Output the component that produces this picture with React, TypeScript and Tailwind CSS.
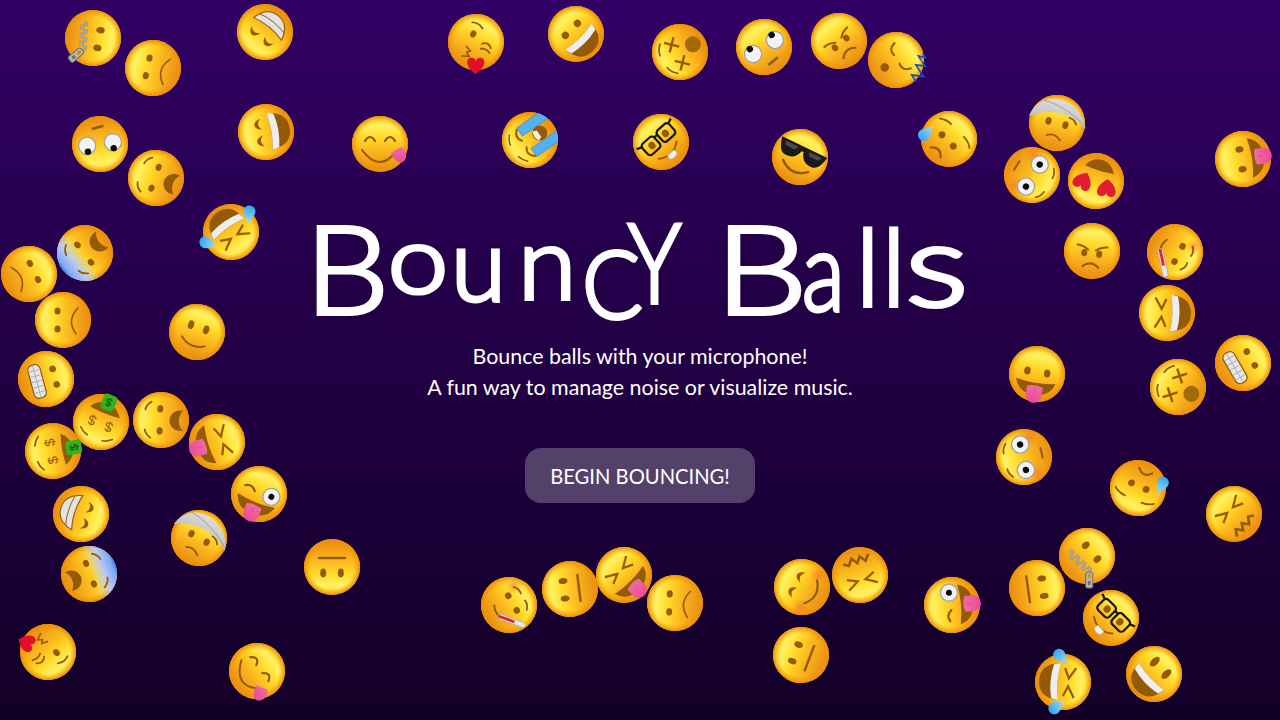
import type { ReactNode } from "react";

const BROWN = "#955a05";

function Arc({ d, w = 1.8 }: { d: string; w?: number }) {
  return <path d={d} fill="none" stroke={BROWN} strokeWidth={w} strokeLinecap="round" />;
}

function Eye({ x, y = -5.5, rx = 3, ry = 4.2 }: { x: number; y?: number; rx?: number; ry?: number }) {
  return <ellipse cx={x} cy={y} rx={rx} ry={ry} fill={BROWN} />;
}

const Eyes = (props: { x?: number; y?: number; rx?: number; ry?: number }) => (
  <>
    <Eye {...props} x={-(props.x ?? 9)} />
    <Eye {...props} x={props.x ?? 9} />
  </>
);

// crescent eyes used by the smiling faces
function Crescent({ x, y }: { x: number; y: number }) {
  return (
    <path
      d={`M${x - 5.5} ${y + 3.5}C${x - 4} ${y - 5.5} ${x + 4} ${y - 5.5} ${x + 5.5} ${y + 3.5}C${x + 2} ${y - 0.5} ${x - 2} ${y - 0.5} ${x - 5.5} ${y + 3.5}Z`}
      fill={BROWN}
    />
  );
}

function SmileEyes() {
  return (
    <>
      <Crescent x={-8.5} y={-7} />
      <Crescent x={8.5} y={-7} />
    </>
  );
}

function Squint() {
  return (
    <>
      <path d="M-15 -12L-4 -5.5L-14 -1" fill="none" stroke={BROWN} strokeWidth={2.2} />
      <path d="M15 -12L4 -5.5L14 -1" fill="none" stroke={BROWN} strokeWidth={2.2} />
    </>
  );
}

function OpenMouth({ teeth = true }: { teeth?: boolean }) {
  return (
    <>
      <path d="M-18.5 3.5Q0 7.5 18.5 3.5Q17 24 0 24Q-17 24 -18.5 3.5Z" fill={BROWN} />
      {teeth && <path d="M-18.5 3.5Q0 7.5 18.5 3.5Q18 7.5 17 10.5Q0 14.5 -17 10.5Q-18 7.5 -18.5 3.5Z" fill="#eeeeee" />}
    </>
  );
}

function TongueMouth() {
  return (
    <>
      <path d="M-20 7Q0 11 20 7Q16 21 0 21Q-16 21 -20 7Z" fill={BROWN} />
      <path d="M-8 13Q0 10 8 13V21A8 8 0 0 1 -8 21Z" fill="url(#tongue)" />
      <path d="M0 15V20" stroke="#d0478a" strokeWidth={0.7} />
    </>
  );
}

function GoogleEye({ x, y = 0, r = 8.6, px = 0, py = 0, pr = 3.2 }: { x: number; y?: number; r?: number; px?: number; py?: number; pr?: number }) {
  return (
    <>
      <circle cx={x} cy={y} r={r} fill="#f2f2f4" stroke="#a2a2a6" strokeWidth={1.3} />
      <circle cx={x + px} cy={y + py} r={pr} fill="#0b0b0b" />
    </>
  );
}

function Drop({ x, y, rot = 0, s = 1 }: { x: number; y: number; rot?: number; s?: number }) {
  return (
    <path
      transform={`translate(${x} ${y}) rotate(${rot}) scale(${s})`}
      d="M0 -10C1.5 -4 6 -1.5 6 3A6 6 0 0 1 -6 3C-6 -1.5 -1.5 -4 0 -10Z"
      fill="url(#drop)"
    />
  );
}

const HEART = "M0 7.5C-10 1 -8.5 -6.5 -3.8 -6.5C-1.6 -6.5 0 -4.8 0 -3.2C0 -4.8 1.6 -6.5 3.8 -6.5C8.5 -6.5 10 1 0 7.5Z";

const Blush = () => (
  <>
    <circle cx={-18} cy={9} r={9} fill="url(#blush)" />
    <circle cx={18} cy={9} r={9} fill="url(#blush)" />
  </>
);

const OpenFrownFeatures = () => (
  <>
    <Eyes x={11} y={-1} ry={3} rx={3.6} />
    <Arc d="M-18 -10Q-15 -15 -10 -16" />
    <Arc d="M18 -10Q15 -15 10 -16" />
    <path d="M-10 22C-11.5 12 -4 8.5 0 8.5C4 8.5 11.5 12 10 22C5 16.5 -5 16.5 -10 22Z" fill={BROWN} />
  </>
);

const Bandage = () => (
  <>
    <path
      d="M-29 0C-27 -12 -20 -21 -8 -23C6 -25 24 -18 29 -1C18 -9 10 -10 0 -10C-12 -10 -22 -5 -29 0Z"
      fill="url(#bandage)"
    />
    <path d="M-18 -19C-4 -19 14 -13 27 -4" fill="none" stroke="#8f8f8f" strokeWidth={0.7} />
  </>
);

// every face is drawn upright in a -28..28 box, the ball then gets rotated
const faces: Record<string, ReactNode> = {
  zipper: (
    <>
      <Eyes y={-6} rx={3.2} ry={4.2} />
      <g fill="#a5a7a9" stroke="#7b7b7b" strokeWidth={0.3}>
        {[-15, -11, -7, -3, 1, 5, 9].map((x, i) => (
          <rect key={x} x={x} y={8 + (i % 2 ? 1.8 : -1.8) - 1.8 + (11 - x) * 0.12} width={4.4} height={3.6} />
        ))}
      </g>
      <g transform="translate(13 8) rotate(-50)">
        <rect x={-3.6} y={1} width={7.2} height={16} rx={1.8} fill="#b4b4b4" stroke="#6c6c6c" strokeWidth={1} />
        <rect x={-1.5} y={3} width={3} height={4} fill="#d98b10" />
        <rect x={-1.4} y={10} width={2.8} height={4} rx={0.8} fill="#6f6f6f" />
      </g>
    </>
  ),
  frown: (
    <>
      <Eyes y={-5.5} rx={3.6} ry={3} />
      <Arc d="M-14 13Q0 3 12 15" w={1.6} />
    </>
  ),
  slight: (
    <>
      <Eyes x={8} y={-5} rx={3} ry={4.4} />
      <Arc d="M-13 9Q-1 19 12 11" w={1.8} />
    </>
  ),
  neutral: (
    <>
      <Eyes x={8.8} y={-6} rx={3} ry={4.4} />
      <path d="M-14 9H14" stroke={BROWN} strokeWidth={2.4} />
    </>
  ),
  rolling: (
    <>
      <GoogleEye x={-13} px={0} py={-6} />
      <GoogleEye x={13} px={0} py={-6} />
      <path d="M-6 17.5L6 16" stroke={BROWN} strokeWidth={2.6} />
    </>
  ),
  openFrown: <OpenFrownFeatures />,
  fear: (
    <>
      <circle r={28} fill="url(#fear)" />
      <OpenFrownFeatures />
    </>
  ),
  smile: (
    <>
      <SmileEyes />
      <OpenMouth />
    </>
  ),
  grin: (
    <>
      <Eyes x={8.5} y={-6.5} rx={3.6} ry={3.6} />
      <OpenMouth />
    </>
  ),
  grinOval: (
    <>
      <Eyes x={8.5} y={-9} rx={3.4} ry={6} />
      <OpenMouth />
    </>
  ),
  beam: (
    <>
      <SmileEyes />
      <path d="M-18 4Q0 9 18 4Q14 21 0 21Q-14 21 -18 4Z" fill="#e2e2e2" stroke={BROWN} strokeWidth={1.1} />
      <path d="M-16 11Q0 15 16 11" fill="none" stroke={BROWN} strokeWidth={0.9} />
    </>
  ),
  squintGrin: (
    <>
      <Squint />
      <OpenMouth />
    </>
  ),
  laughTears: (
    <>
      <Squint />
      <OpenMouth />
      <Drop x={-25} y={4} rot={40} s={1} />
      <Drop x={25} y={4} rot={-40} s={1} />
    </>
  ),
  tongue: (
    <>
      <Eyes x={10} y={-2} rx={3.2} ry={4} />
      <TongueMouth />
    </>
  ),
  wink: (
    <>
      <GoogleEye x={12.5} y={-2} r={8.5} pr={3} />
      <Arc d="M-16 -3Q-10 -7 -5 -1" w={2.2} />
      <TongueMouth />
    </>
  ),
  squintTongue: (
    <>
      <Squint />
      <TongueMouth />
    </>
  ),
  yum: (
    <>
      <Arc d="M-15 -3Q-10 -11 -5 -3" w={2.2} />
      <Arc d="M5 -3Q10 -11 15 -3" w={2.2} />
      <Arc d="M-18 6Q-1 29 16 8" w={2} />
      <path d="M11 9L21 3C28 5 27 16 23 18C19 20 13 15 11 9Z" fill="url(#tongue)" />
    </>
  ),
  sob: (
    <g clipPath="url(#ball)">
      <rect x={-17.5} y={-4} width={10} height={34} fill="#55b0ef" stroke="#2d8fd8" strokeWidth={0.6} />
      <rect x={7.5} y={-4} width={10} height={34} fill="#55b0ef" stroke="#2d8fd8" strokeWidth={0.6} />
      <Arc d="M-16 -5Q-10 -12 -4 -7" w={2} />
      <Arc d="M16 -5Q10 -12 4 -7" w={2} />
      <Arc d="M-16 -14Q-12 -18 -7 -19" w={1.5} />
      <Arc d="M16 -14Q12 -18 7 -19" w={1.5} />
      <circle cx={0} cy={12} r={7.5} fill={BROWN} />
      <path d="M-5.5 7Q0 4 5.5 7L4 11H-4Z" fill="#eeeeee" />
    </g>
  ),
  nerd: (
    <>
      <Eyes x={9} y={-3.5} rx={3.4} ry={3.8} />
      <Arc d="M-13 11Q0 20 12 10" w={1.9} />
      <path d="M-4.5 14.5H4.5V19Q0 22 -4.5 19Z" fill="#f0f0f0" stroke="#b8b8b8" strokeWidth={0.4} />
      <g fill="none" stroke="#141414" strokeWidth={2.2}>
        <rect x={-18} y={-11} width={16} height={14.5} rx={3.5} />
        <rect x={2} y={-11} width={16} height={14.5} rx={3.5} />
        <path d="M-2 -8H2M-18 -9L-23 -11M18 -9L23 -11" />
      </g>
    </>
  ),
  cool: (
    <>
      <path
        d="M-25 -11H25L24 -7C22 1 19 5 11 4C5 3.5 2 -2 1 -6H-1C-2 -2 -5 3.5 -11 4C-19 5 -22 1 -24 -7Z"
        fill="#1a1a1c"
      />
      <path d="M-20 -8.5H-6L-8 -4.5H-18ZM6 -8.5H20L18 -4.5H8Z" fill="#4d4d50" />
      <Arc d="M-14 10Q0 22 14 10" w={2.4} />
    </>
  ),
  sweat: (
    <>
      <Eyes x={8} y={2} rx={3.4} ry={3.4} />
      <Arc d="M-21 -8Q-16 -12 -9 -12" />
      <Arc d="M21 -8Q16 -12 9 -12" />
      <Arc d="M-7 19Q0 11 7 19" w={2.2} />
      <Drop x={-20.5} y={12} />
    </>
  ),
  kiss: (
    <>
      <Eye x={-6} y={-6} rx={3} ry={3.7} />
      <Arc d="M-12 -16Q-6 -19 0 -15" />
      <Arc d="M6 -1Q11 -6 16 -1" w={1.8} />
      <Arc d="M7 4Q12 1 17 4" w={1.8} />
      <path d="M-7 8L-1 10.5L-4 13L0 16L-7 19" fill="none" stroke={BROWN} strokeWidth={1.6} />
      <path d={HEART} fill="#e30f24" transform="translate(10 21) rotate(-25) scale(1.15)" />
    </>
  ),
  dizzy: (
    <>
      <g stroke={BROWN} strokeWidth={2.4}>
        <path d="M-16 -9L-5 2M-5 -9L-16 2M16 -9L5 2M5 -9L16 2" />
      </g>
      <Arc d="M-17 -13Q-13 -18 -7 -19" />
      <Arc d="M17 -13Q13 -18 7 -19" />
      <circle cx={0} cy={15} r={8} fill="#a56a08" />
    </>
  ),
  angry: (
    <>
      <Eyes x={7.5} y={2.5} rx={3} ry={3.6} />
      <Arc d="M-15 -5Q-9 -5 -4 -1" w={2} />
      <Arc d="M15 -5Q9 -5 4 -1" w={2} />
      <Arc d="M-8 16Q0 9 8 16" w={2} />
    </>
  ),
  sleep: (
    <>
      <Arc d="M-15 -8Q-13 1 -5 -1" w={2} />
      <Arc d="M15 -8Q13 1 5 -1" w={2} />
      <circle cx={0} cy={13.5} r={4.3} fill={BROWN} />
      <g fill="none" stroke="#174fc0" strokeWidth={1.7}>
        <path d="M9 -26H14L9 -21H14" />
        <path d="M15 -21H21L15 -14H21" />
        <path d="M21 -14H29L21 -5H29" />
      </g>
    </>
  ),
  bandage: (
    <>
      <Eyes x={8.7} y={0} rx={3} ry={3.8} />
      <Arc d="M11 -8Q16 -8 19 -3" />
      <Arc d="M-7 14Q0 10 7 16" />
      <Bandage />
    </>
  ),
  flushed: (
    <>
      <Blush />
      <GoogleEye x={-13} y={-1} r={8.6} />
      <GoogleEye x={13} y={-1} r={8.6} />
      <Arc d="M-17 -15Q-13 -19 -8 -19" w={1.8} />
      <Arc d="M17 -15Q13 -19 8 -19" w={1.8} />
      <Arc d="M-5 18H5" w={2} />
    </>
  ),
  hearts: (
    <>
      <path d={HEART} fill="#e31b33" transform="translate(-12.5 -4) rotate(-10) scale(1.25)" />
      <path d={HEART} fill="#e31b33" transform="translate(12.5 -4) rotate(10) scale(1.25)" />
      <path d="M-15 12Q0 10 15 12Q10 22 0 22Q-10 22 -15 12Z" fill={BROWN} />
    </>
  ),
  blush: (
    <>
      <Blush />
      <SmileEyes />
      <Arc d="M-13 10Q0 21 13 10" w={2.2} />
    </>
  ),
  confounded: (
    <>
      <Squint />
      <path d="M-14 18L-9.5 12L-5 18L-1 12L3.5 18L8 12L13 15" fill="none" stroke={BROWN} strokeWidth={2.6} />
    </>
  ),
  grimace: (
    <>
      <Eyes x={8} y={-9} rx={3.3} ry={3.3} />
      <rect x={-17} y={3} width={34} height={12.5} rx={5} fill="#e6e6e6" stroke={BROWN} strokeWidth={1.2} />
      <path d="M-16 9.5H16M-11 4V15M-5.5 4V15M0 4V15M5.5 4V15M11 4V15" stroke="#9f9f9f" strokeWidth={0.7} />
    </>
  ),
  money: (
    <>
      <Arc d="M-17 -12Q-13 -16 -8 -17" w={1.7} />
      <Arc d="M17 -12Q13 -16 8 -17" w={1.7} />
      <text x={-9} y={3} textAnchor="middle" fontSize={14} fontFamily="Liberation Sans, sans-serif" fill={BROWN}>
        $
      </text>
      <text x={9} y={3} textAnchor="middle" fontSize={14} fontFamily="Liberation Sans, sans-serif" fill={BROWN}>
        $
      </text>
      <path d="M-16 10.5Q0 8 16 10.5Q10 20 0 20Q-10 20 -16 10.5Z" fill={BROWN} />
      <rect x={-7} y={13} width={14} height={16} rx={3.5} fill="#35b020" />
      <text x={0} y={25} textAnchor="middle" fontSize={11.5} fontFamily="Liberation Sans, sans-serif" fill="#0d4d10">
        $
      </text>
    </>
  ),
  thermo: (
    <>
      <circle cx={-14} cy={-14} r={8} fill="url(#blush)" />
      <Eyes x={8.5} y={-4} rx={3.4} ry={3.2} />
      <Arc d="M-13 -13Q-9 -17 -4 -16" />
      <Arc d="M13 -13Q9 -17 4 -16" />
      <Arc d="M-7 13Q-1 16 5 14" w={1.9} />
      <g transform="translate(4 15) rotate(-40)">
        <rect x={0} y={-2.6} width={29} height={5.2} rx={2.4} fill="#e8e8ea" stroke="#a2a2a6" strokeWidth={0.6} />
        <rect x={0.5} y={-1.4} width={17} height={2.8} fill="#e2232f" />
      </g>
    </>
  ),
};

const balls: [string, number, number, number][] = [
  ["zipper", 93, 38, 100],
  ["frown", 153, 68, -78],
  ["beam", 265, 32, -141],
  ["kiss", 476, 42, 26],
  ["grin", 576, 34, -45],
  ["dizzy", 680, 52, -121],
  ["rolling", 764, 47, -33],
  ["angry", 839, 41, -41],
  ["sleep", 896, 60, 57],
  ["rolling", 100, 144, 172],
  ["openFrown", 156, 178, -71],
  ["smile", 266, 132, -100],
  ["yum", 379.5, 144, 0],
  ["sob", 530, 140, -125],
  ["nerd", 661, 142, -42],
  ["cool", 800, 157, 26],
  ["sweat", 948.5, 138.5, 45],
  ["bandage", 1057, 123, 14],
  ["flushed", 1032, 175, 122],
  ["hearts", 1095.5, 181, 197],
  ["tongue", 1243, 159, -99],
  ["laughTears", 231, 232, 145],
  ["fear", 85, 253, -128],
  ["frown", 29, 274, 63],
  ["frown", 63, 320, -90],
  ["slight", 197, 332, 19],
  ["grimace", 46, 379, 75],
  ["money", 53, 451, -100],
  ["money", 101, 422, 202],
  ["openFrown", 161, 420, -88],
  ["squintTongue", 216.5, 442, 72],
  ["wink", 258.5, 494, 22],
  ["beam", 81, 514, 108],
  ["bandage", 199, 538, 29],
  ["fear", 89, 574, 69],
  ["neutral", 331.5, 567, 180],
  ["kiss", 48, 652, 139],
  ["yum", 257, 670.5, 53],
  ["thermo", 509, 605, 60],
  ["neutral", 570, 589, -97],
  ["frown", 675, 603, -88],
  ["squintTongue", 624, 575, -45],
  ["blush", 802, 587, -61],
  ["confounded", 860, 575, 163],
  ["neutral", 801, 655, -69],
  ["wink", 951.5, 605, -95],
  ["angry", 1091.5, 250.5, 6],
  ["thermo", 1175, 252, 118],
  ["squintGrin", 1167, 313, -88],
  ["tongue", 1037, 374, 9],
  ["dizzy", 1178, 387, -63],
  ["grimace", 1243, 363, 60],
  ["flushed", 1024, 457, -103],
  ["sweat", 1138, 488, -156],
  ["confounded", 1234, 514, -45],
  ["neutral", 1037, 588, 82],
  ["zipper", 1087, 556, 50],
  ["nerd", 1111, 618, 45],
  ["laughTears", 1063, 682, 95],
  ["grinOval", 1154, 674, 47],
];

function Ball({ type, x, y, rot }: { type: string; x: number; y: number; rot: number }) {
  return (
    <svg
      viewBox="-28 -28 56 56"
      className="absolute h-14 w-14 overflow-visible"
      style={{ left: x - 28, top: y - 28, transform: `rotate(${rot}deg)` }}
    >
      <circle r={28} fill="url(#face)" />
      <circle r={28} fill="url(#rim)" />
      {faces[type]}
    </svg>
  );
}

function Gradients() {
  return (
    <svg className="absolute h-0 w-0">
      <defs>
        <linearGradient id="face" x1="0" y1="0" x2="0" y2="1">
          <stop offset="0" stopColor="#ffdc38" />
          <stop offset="0.18" stopColor="#fff060" />
          <stop offset="0.36" stopColor="#ffdc2c" />
          <stop offset="0.62" stopColor="#fbb61e" />
          <stop offset="1" stopColor="#e68c12" />
        </linearGradient>
        <radialGradient id="rim">
          <stop offset="0.78" stopColor="#f19300" stopOpacity="0" />
          <stop offset="0.92" stopColor="#f19300" stopOpacity="0.6" />
          <stop offset="1" stopColor="#ec8e00" stopOpacity="1" />
        </radialGradient>
        <linearGradient id="fear" x1="0" y1="0" x2="0" y2="1">
          <stop offset="0" stopColor="#1f84ff" />
          <stop offset="0.06" stopColor="#7fa9f7" />
          <stop offset="0.24" stopColor="#bcc8ee" />
          <stop offset="0.46" stopColor="#bcc8ee" stopOpacity="0" />
        </linearGradient>
        <linearGradient id="tongue" x1="0" y1="0" x2="0" y2="1">
          <stop offset="0" stopColor="#f06ca8" />
          <stop offset="1" stopColor="#ec4a94" />
        </linearGradient>
        <linearGradient id="drop" x1="0" y1="0" x2="0" y2="1">
          <stop offset="0" stopColor="#a8e0fa" />
          <stop offset="1" stopColor="#2fa5ea" />
        </linearGradient>
        <linearGradient id="bandage" x1="0" y1="0" x2="0" y2="1">
          <stop offset="0" stopColor="#dcdcdc" />
          <stop offset="1" stopColor="#bfbfbf" />
        </linearGradient>
        <radialGradient id="blush">
          <stop offset="0" stopColor="#f0702a" stopOpacity="0.6" />
          <stop offset="1" stopColor="#f0702a" stopOpacity="0" />
        </radialGradient>
        <clipPath id="ball">
          <circle r={28} />
        </clipPath>
      </defs>
    </svg>
  );
}

// hand-fitted letters: the picture's face is a wobbly marker hand, so each one is placed on its own
const letters = [
  { ch: "B", cls: "text-[122px] w-[78px] -translate-x-[9px] translate-y-[6px] scale-x-[1.09]" },
  { ch: "o", cls: "text-[92px] w-[65px] -translate-x-[4px] -translate-y-[15px] scale-x-[1.17]" },
  { ch: "u", cls: "text-[100px] w-[67px] -translate-x-[6px] -translate-y-[7px]" },
  { ch: "n", cls: "text-[100px] w-[61px] -translate-x-[6px] -translate-y-[9px] scale-x-[1.06]" },
  { ch: "C", cls: "text-[94px] w-[43px] -translate-x-[3px] translate-y-[12px] -rotate-3 scale-x-[0.93]" },
  { ch: "Y", cls: "text-[110px] w-[96px] translate-y-[-5px] scale-x-[0.81]" },
  { ch: "B", cls: "text-[122px] w-[82px] -translate-x-[9px] translate-y-[6px] scale-x-[1.2]" },
  { ch: "a", cls: "text-[110px] w-[57px] -translate-x-[4px] translate-y-[3px] scale-x-[0.8]" },
  { ch: "l", cls: "text-[106px] w-[26px] -translate-x-[7px] -translate-y-[2px]" },
  { ch: "l", cls: "text-[106px] w-[21px] -translate-x-[7px] -translate-y-[2px]" },
  { ch: "s", cls: "text-[115px] w-[54px] -translate-x-[5px] -translate-y-[2px] scale-x-[1.3]" },
];

export default function App() {
  return (
    <main className="relative h-[720px] w-full overflow-hidden bg-gradient-to-b from-[#320065] to-[#130027] font-['Lato',sans-serif] text-white">
      <Gradients />
      {balls.map(([type, x, y, rot], i) => (
        <Ball key={i} type={type} x={x} y={y} rot={rot} />
      ))}
      <div className="relative flex flex-col items-center pt-[200px]">
        <h1 className="flex h-[141px] w-[652px] items-baseline leading-none font-light whitespace-nowrap [-webkit-text-stroke:4px_white] [text-shadow:0_0_16px_rgba(0,0,0,0.35)]">
          {letters.map((l, i) => (
            <span key={i} className={`inline-block origin-left ${l.cls}`}>
              {l.ch}
            </span>
          ))}
        </h1>
        <p className="text-center text-[21.4px] leading-[31px]">
          Bounce balls with your microphone!
          <br />
          A fun way to manage noise or visualize music.
        </p>
        <button className="mt-[45px] flex h-[55px] w-[230px] items-center justify-center rounded-2xl bg-[#54416a] pt-[1px] text-[20.2px] text-white">
          BEGIN BOUNCING!
        </button>
      </div>
    </main>
  );
}
